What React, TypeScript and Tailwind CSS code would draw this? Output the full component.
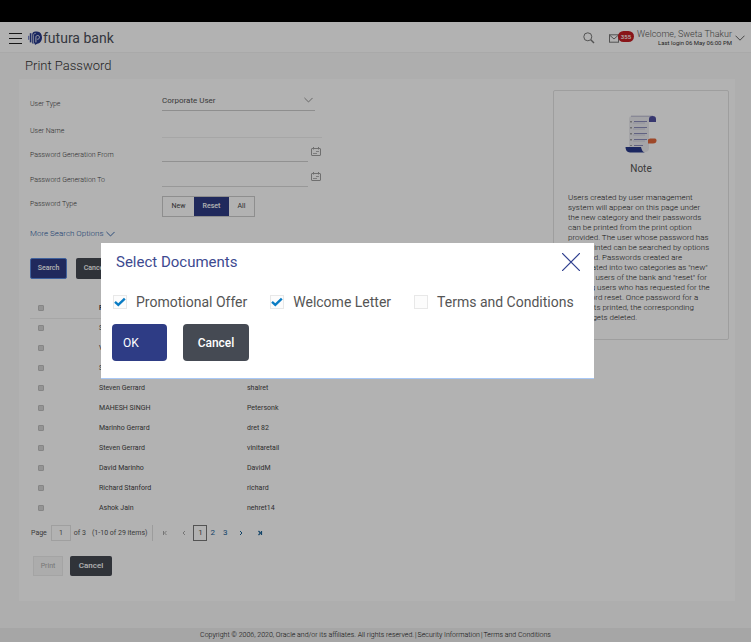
import { useState } from "react";
import type { ReactNode } from "react";

interface User {
  name: string;
  login: string;
}

const users: User[] = [
  { name: "Steven Gerrard", login: "steveng" },
  { name: "Vikas", login: "vikas" },
  { name: "Steven Gerrard", login: "sgerrard" },
  { name: "Steven Gerrard", login: "shalret" },
  { name: "MAHESH SINGH", login: "Petersonk" },
  { name: "Marinho Gerrard", login: "dret 82" },
  { name: "Steven Gerrard", login: "vinitaretail" },
  { name: "David Marinho", login: "DavidM" },
  { name: "Richard Stanford", login: "richard" },
  { name: "Ashok Jain", login: "nehret14" },
];

const passwordTypes = [
  { label: "New", width: "w-[31px]" },
  { label: "Reset", width: "w-[35px]" },
  { label: "All", width: "w-[25px]" },
];

function Chevron({ className }: { className: string }) {
  return (
    <svg viewBox="0 0 10 6" className={className} fill="none" stroke="currentColor" aria-hidden="true">
      <path d="M0.5 0.7L5 5.2L9.5 0.7" />
    </svg>
  );
}

function Logo() {
  return (
    <svg viewBox="0 0 14 14" className="h-[14px] w-[14px] shrink-0" aria-hidden="true">
      <path d="M0.7 4.8V8.8" stroke="#5a6cbe" strokeWidth="1" />
      <path d="M2.6 2.2V11.4" stroke="#2c3e8f" strokeWidth="1.6" />
      <path
        d="M4.2 11.8V3.4C4.2 1.6 5.6 0.4 7.4 0.4H9C12.2 0.4 14 3.2 14 6.6C14 10.4 11.6 12.6 9.2 12.8L6.9 14V12.4L4.2 12.4"
        fill="#26388c"
      />
      <path d="M5.5 12.6V4.6C5.5 3.2 6.2 2.4 7.4 2.4H8" fill="none" stroke="#fff" strokeWidth="0.6" />
      <path
        d="M7.9 11.4V6.4C7.9 5.1 8.5 4.5 9.6 4.5C10.8 4.5 11.4 5.2 11.4 6.3C11.4 7.5 10.6 8.3 9.3 8.3"
        fill="none"
        stroke="#fff"
        strokeWidth="0.9"
      />
    </svg>
  );
}

function CalendarIcon() {
  return (
    <svg viewBox="0 0 10 10" className="h-[10px] w-[10px]" fill="none" stroke="#a0a0a0" aria-hidden="true">
      <rect x="0.5" y="1.5" width="9" height="7" rx="0.5" />
      <path d="M2.5 0V2.5M7.5 0V2.5" />
      <path d="M5 4.5H8M2 6.5H6" strokeWidth="0.8" />
    </svg>
  );
}

function NoteIllustration() {
  return (
    <svg viewBox="0 0 32 38" className="h-[38px] w-8" aria-hidden="true">
      <path d="M4 4Q4 1 7 1H28Q24 2 24 6V33Q24 37 20 37H4Z" fill="#ebebef" />
      <path d="M6 1.2H28" stroke="#b4b4cc" />
      <path d="M24 7V4Q24 1 27.5 1Q31 1 31 4V7Z" fill="#4f50a0" />
      <path d="M9 6.5H22M9 12.5H22M9 18.5H22M9 24.5H22M9 30.5H18" stroke="#8c8dba" />
      <path d="M8 8H20M8 14H20M8 20H20M8 26H20" stroke="#c8c9dc" strokeWidth="0.8" />
      <path d="M6 6V7.5M6 12V13.5M6 18V19.5M6 24V25.5M6 30V31" stroke="#555" />
      <path d="M0.5 32H16Q17 37 20 37.5H5Q0.5 37 0.5 32Z" fill="#28388a" />
      <path d="M23 24.5L25 23.5H30Q31.5 23.5 31.5 25.5Q31.5 28.5 28 28.5H23Z" fill="#e2683c" />
    </svg>
  );
}

function FieldRow({ id, label, height, children }: { id: string; label: string; height: string; children: ReactNode }) {
  return (
    <div className={`flex items-end ${height}`}>
      <label htmlFor={id} className="w-[132px] text-[7px] leading-[14px] font-light text-[#444]">
        {label}
      </label>
      {children}
    </div>
  );
}

function DocumentOption({ label, defaultChecked = false }: { label: string; defaultChecked?: boolean }) {
  return (
    <label className="flex items-center gap-[9px] text-[14px] leading-5 text-[#555]">
      <span className="relative flex h-[14px] w-[14px]">
        <input
          type="checkbox"
          defaultChecked={defaultChecked}
          className="peer h-[14px] w-[14px] appearance-none border border-[#e8e8e8] bg-[#fcfcfc]"
        />
        <svg
          viewBox="0 0 14 14"
          className="pointer-events-none absolute inset-0 hidden peer-checked:block"
          fill="none"
          stroke="#0a7cc4"
          strokeWidth="2.4"
          aria-hidden="true"
        >
          <path d="M2 6.8L5.3 9.8L11.8 3.6" />
        </svg>
      </span>
      {label}
    </label>
  );
}

function Header() {
  return (
    <header className="flex h-[31px] items-center border-b border-[#f2f2f2] bg-white pt-[2px] pr-[6px] pl-[9px]">
      <button type="button" aria-label="Menu" className="flex w-[13px] flex-col gap-1">
        <span className="h-px bg-[#222]" />
        <span className="h-px bg-[#222]" />
        <span className="h-px bg-[#222]" />
      </button>
      <a href="#" className="ml-[6px] flex items-center gap-px text-[14px] leading-4 text-[#4c4f5a]">
        <Logo />
        futura bank
      </a>
      <div className="ml-auto flex items-center">
        <button type="button" aria-label="Search" className="mr-[14px]">
          <svg viewBox="0 0 12 12" className="h-3 w-3" fill="none" stroke="#777" aria-hidden="true">
            <circle cx="4.8" cy="4.8" r="4" />
            <path d="M7.8 7.8L11 11" strokeWidth="1.4" />
          </svg>
        </button>
        <button type="button" aria-label="Messages" className="mr-[3px] flex items-center">
          <svg viewBox="0 0 10 9" className="h-[9px] w-[10px]" fill="none" stroke="#777" aria-hidden="true">
            <rect x="0.5" y="0.8" width="9" height="7.4" />
            <path d="M0.5 1L5 5L9.5 1" />
          </svg>
          <span className="-ml-px mb-1 rounded-full bg-[#c41f24] px-[3px] text-[6px] leading-[11px] font-medium text-white">
            355
          </span>
        </button>
        <div className="text-right text-[#555]">
          <p className="text-[9px] leading-[10px] font-light">Welcome, Sweta Thakur</p>
          <p className="text-[6px] leading-2 text-[#333]">Last login 06 May 06:00 PM</p>
        </div>
        <button type="button" aria-label="Account menu" className="ml-[3px]">
          <Chevron className="h-[6px] w-[10px] text-[#666]" />
        </button>
      </div>
    </header>
  );
}

function SearchForm() {
  const [passwordType, setPasswordType] = useState("Reset");

  return (
    <form onSubmit={(e) => e.preventDefault()}>
      <FieldRow id="user-type" label="User Type" height="h-8">
        <div className="relative w-[153px]">
          <select
            id="user-type"
            className="block h-5 w-full appearance-none border-b border-[#ccc] text-[8px] text-[#555]"
          >
            <option>Corporate User</option>
          </select>
          <Chevron className="pointer-events-none absolute top-[6px] right-[2px] h-[6px] w-[9px] text-[#888]" />
        </div>
      </FieldRow>
      <FieldRow id="user-name" label="User Name" height="h-[27px]">
        <input id="user-name" type="text" className="h-5 w-40 border-b border-[#eee] text-[8px]" />
      </FieldRow>
      <FieldRow id="date-from" label="Password Generation From" height="h-6">
        <input id="date-from" type="text" className="h-5 w-[146px] border-b border-[#d0d0d0] text-[8px]" />
        <button type="button" aria-label="Pick start date" className="mb-[5px] ml-[3px]">
          <CalendarIcon />
        </button>
      </FieldRow>
      <FieldRow id="date-to" label="Password Generation To" height="h-[25px]">
        <input id="date-to" type="text" className="h-5 w-[146px] border-b border-[#dadada] text-[8px]" />
        <button type="button" aria-label="Pick end date" className="mb-[5px] ml-[3px]">
          <CalendarIcon />
        </button>
      </FieldRow>
      <div className="mt-[9px] flex">
        <span className="w-[132px] text-[7px] leading-4 font-light text-[#444]">Password Type</span>
        <div className="flex h-[21px] border border-[#ccc] text-[7px]">
          {passwordTypes.map(({ label, width }) => (
            <button
              key={label}
              type="button"
              onClick={() => setPasswordType(label)}
              className={`${width} ${label === passwordType ? "bg-[#2e3c85] font-medium text-white" : "text-[#444]"}`}
            >
              {label}
            </button>
          ))}
        </div>
      </div>
      <a href="#" className="mt-[9px] flex items-center gap-[2px] text-[8px] leading-4 font-light text-[#2a5ca4]">
        More Search Options
        <Chevron className="h-[6px] w-[9px]" />
      </a>
      <div className="mt-4 flex gap-[9px] text-[7px] font-medium text-white">
        <button type="submit" className="h-[21px] w-[37px] rounded-xs border border-[#5b8be0] bg-[#2e3c85]">
          Search
        </button>
        <button type="button" className="h-[21px] w-[37px] rounded-xs bg-[#454952]">
          Cancel
        </button>
      </div>
    </form>
  );
}

function RowCheckbox({ label }: { label: string }) {
  return (
    <input
      type="checkbox"
      aria-label={label}
      className="ml-2 block h-[6px] w-[6px] appearance-none rounded-[1px] border border-[#c0c0c0] bg-[#d4d4d4]"
    />
  );
}

function UserTable() {
  return (
    <table className="mt-5 w-full table-fixed text-left text-[7px] leading-[10px] text-[#444]">
      <thead>
        <tr className="h-[19px] border-b border-[#eee]">
          <th className="w-[69px]">
            <RowCheckbox label="Select all" />
          </th>
          <th className="w-[148px] font-bold">Full Name</th>
          <th className="font-bold">User Name</th>
        </tr>
      </thead>
      <tbody>
        {users.map((user) => (
          <tr key={user.login} className="h-5">
            <td>
              <RowCheckbox label={`Select ${user.login}`} />
            </td>
            <td>{user.name}</td>
            <td>{user.login}</td>
          </tr>
        ))}
      </tbody>
    </table>
  );
}

function Pagination() {
  return (
    <nav aria-label="Pages" className="mt-[7px] flex items-center pl-px text-[7px] leading-4 text-[#555]">
      <label htmlFor="page">Page</label>
      <input id="page" type="text" defaultValue="1" className="ml-1 h-4 w-5 border border-[#e4e4e4] text-center" />
      <span className="ml-[3px]">of 3</span>
      <span className="ml-[6px] border-r border-[#e0e0e0] pr-[5px]">(1-10 of 29 items)</span>
      <button type="button" aria-label="First page" disabled className="ml-[9px] text-[#aaa]">
        <svg viewBox="0 0 6 6" className="h-[6px] w-[6px]" fill="none" stroke="currentColor">
          <path d="M1.5 1V5M4.5 1L2.5 3L4.5 5" />
        </svg>
      </button>
      <button type="button" aria-label="Previous page" disabled className="ml-[13px] text-[#aaa]">
        <svg viewBox="0 0 6 6" className="h-[6px] w-[6px]" fill="none" stroke="currentColor">
          <path d="M4 1L2 3L4 5" />
        </svg>
      </button>
      <button type="button" aria-current="page" className="ml-[6px] h-4 w-[14px] border border-[#777] text-[8px] leading-[14px]">
        1
      </button>
      <a href="#" className="ml-[3px] text-[8px] text-[#1a6296]">
        2
      </a>
      <a href="#" className="ml-2 text-[8px] text-[#1a6296]">
        3
      </a>
      <button type="button" aria-label="Next page" className="ml-[11px] text-[#1a6296]">
        <svg viewBox="0 0 6 6" className="h-[6px] w-[6px]" fill="none" stroke="currentColor">
          <path d="M2 1L4 3L2 5" />
        </svg>
      </button>
      <button type="button" aria-label="Last page" className="ml-[13px] text-[#1a6296]">
        <svg viewBox="0 0 6 6" className="h-[6px] w-[6px]" fill="none" stroke="currentColor" strokeWidth="1.2">
          <path d="M4.5 1V5M1.5 1L3.5 3L1.5 5" />
        </svg>
      </button>
    </nav>
  );
}

function NoteCard() {
  return (
    <aside className="mt-[11px] h-[250px] w-44 shrink-0 rounded-xs border border-[#e2e2e2] px-[14px] pt-6">
      <div className="flex justify-center">
        <NoteIllustration />
      </div>
      <h2 className="mt-2 text-center text-[10px] leading-4 text-[#555]">Note</h2>
      <p className="mt-4 text-[8px] leading-[10px] font-light whitespace-nowrap text-[#222]">
        Users created by user management
        <br />
        system will appear on this page under
        <br />
        the new category and their passwords
        <br />
        can be printed from the print option
        <br />
        provided. The user whose password has
        <br />
        been printed can be searched by options
        <br />
        provided. Passwords created are
        <br />
        segregated into two categories as "new"
        <br />
        namely users of the bank and "reset" for
        <br />
        existing users who has requested for the
        <br />
        password reset. Once password for a
        <br />
        user gets printed, the corresponding
        <br />
        record gets deleted.
      </p>
    </aside>
  );
}

function SelectDocumentsDialog() {
  return (
    <div className="absolute inset-0 bg-black/30 pt-[221px] pl-[101px]">
      <div
        role="dialog"
        aria-labelledby="dialog-title"
        className="w-[493px] border-b border-[#a9c8f5] bg-white px-[11px] pt-[9px] pb-[17px]"
      >
        <div className="flex items-center justify-between pr-[3px] pl-1">
          <h2 id="dialog-title" className="text-[15px] leading-5 text-[#3d4a90]">
            Select Documents
          </h2>
          <button type="button" aria-label="Close">
            <svg viewBox="0 0 18 18" className="h-[18px] w-[18px]" stroke="#2f3f8f" strokeWidth="1.2" aria-hidden="true">
              <path d="M0 0L18 18M18 0L0 18" />
            </svg>
          </button>
        </div>
        <div className="mt-5 flex gap-[23px] pl-[1px]">
          <DocumentOption label="Promotional Offer" defaultChecked />
          <DocumentOption label="Welcome Letter" defaultChecked />
          <DocumentOption label="Terms and Conditions" />
        </div>
        <div className="mt-3 flex gap-4 text-[12px] text-white">
          <button type="button" className="h-[37px] w-[55px] rounded-sm bg-[#2e3c85] pl-[11px] text-left">
            OK
          </button>
          <button type="button" className="h-[37px] w-[66px] rounded-sm bg-[#454a53] font-medium">
            Cancel
          </button>
        </div>
      </div>
    </div>
  );
}

export default function App() {
  return (
    <div className="flex min-h-screen flex-col bg-black pt-[22px] font-['Roboto',sans-serif]">
      <div className="relative flex flex-1 flex-col bg-[#f9f9f9]">
        <Header />
        <main className="flex-1 pr-4 pl-[19px]">
          <h1 className="px-[6px] pt-[5px] pb-[5px] text-[13px] leading-4 font-light text-[#333]">Print Password</h1>
          <div className="flex bg-white pr-[6px] pb-[25px] pl-[11px]">
            <div className="min-w-0 flex-1">
              <SearchForm />
              <UserTable />
              <Pagination />
              <div className="mt-[15px] ml-[3px] flex gap-[7px]">
                <button
                  type="button"
                  disabled
                  className="h-5 w-[30px] border border-[#ebebeb] bg-[#f7f7f7] text-[7px] text-[#aaa]"
                >
                  Print
                </button>
                <button type="button" className="h-5 w-[42px] rounded-xs bg-[#454952] text-[8px] font-medium text-white">
                  Cancel
                </button>
              </div>
            </div>
            <NoteCard />
          </div>
        </main>
        <footer className="flex h-[14px] items-center justify-center gap-px bg-[#eee] text-[7px] font-light text-[#111]">
          <span>Copyright © 2006, 2020, Oracle and/or its affiliates. All rights reserved.</span>|
          <a href="#">Security Information</a>|<a href="#">Terms and Conditions</a>
        </footer>
        <SelectDocumentsDialog />
      </div>
    </div>
  );
}
